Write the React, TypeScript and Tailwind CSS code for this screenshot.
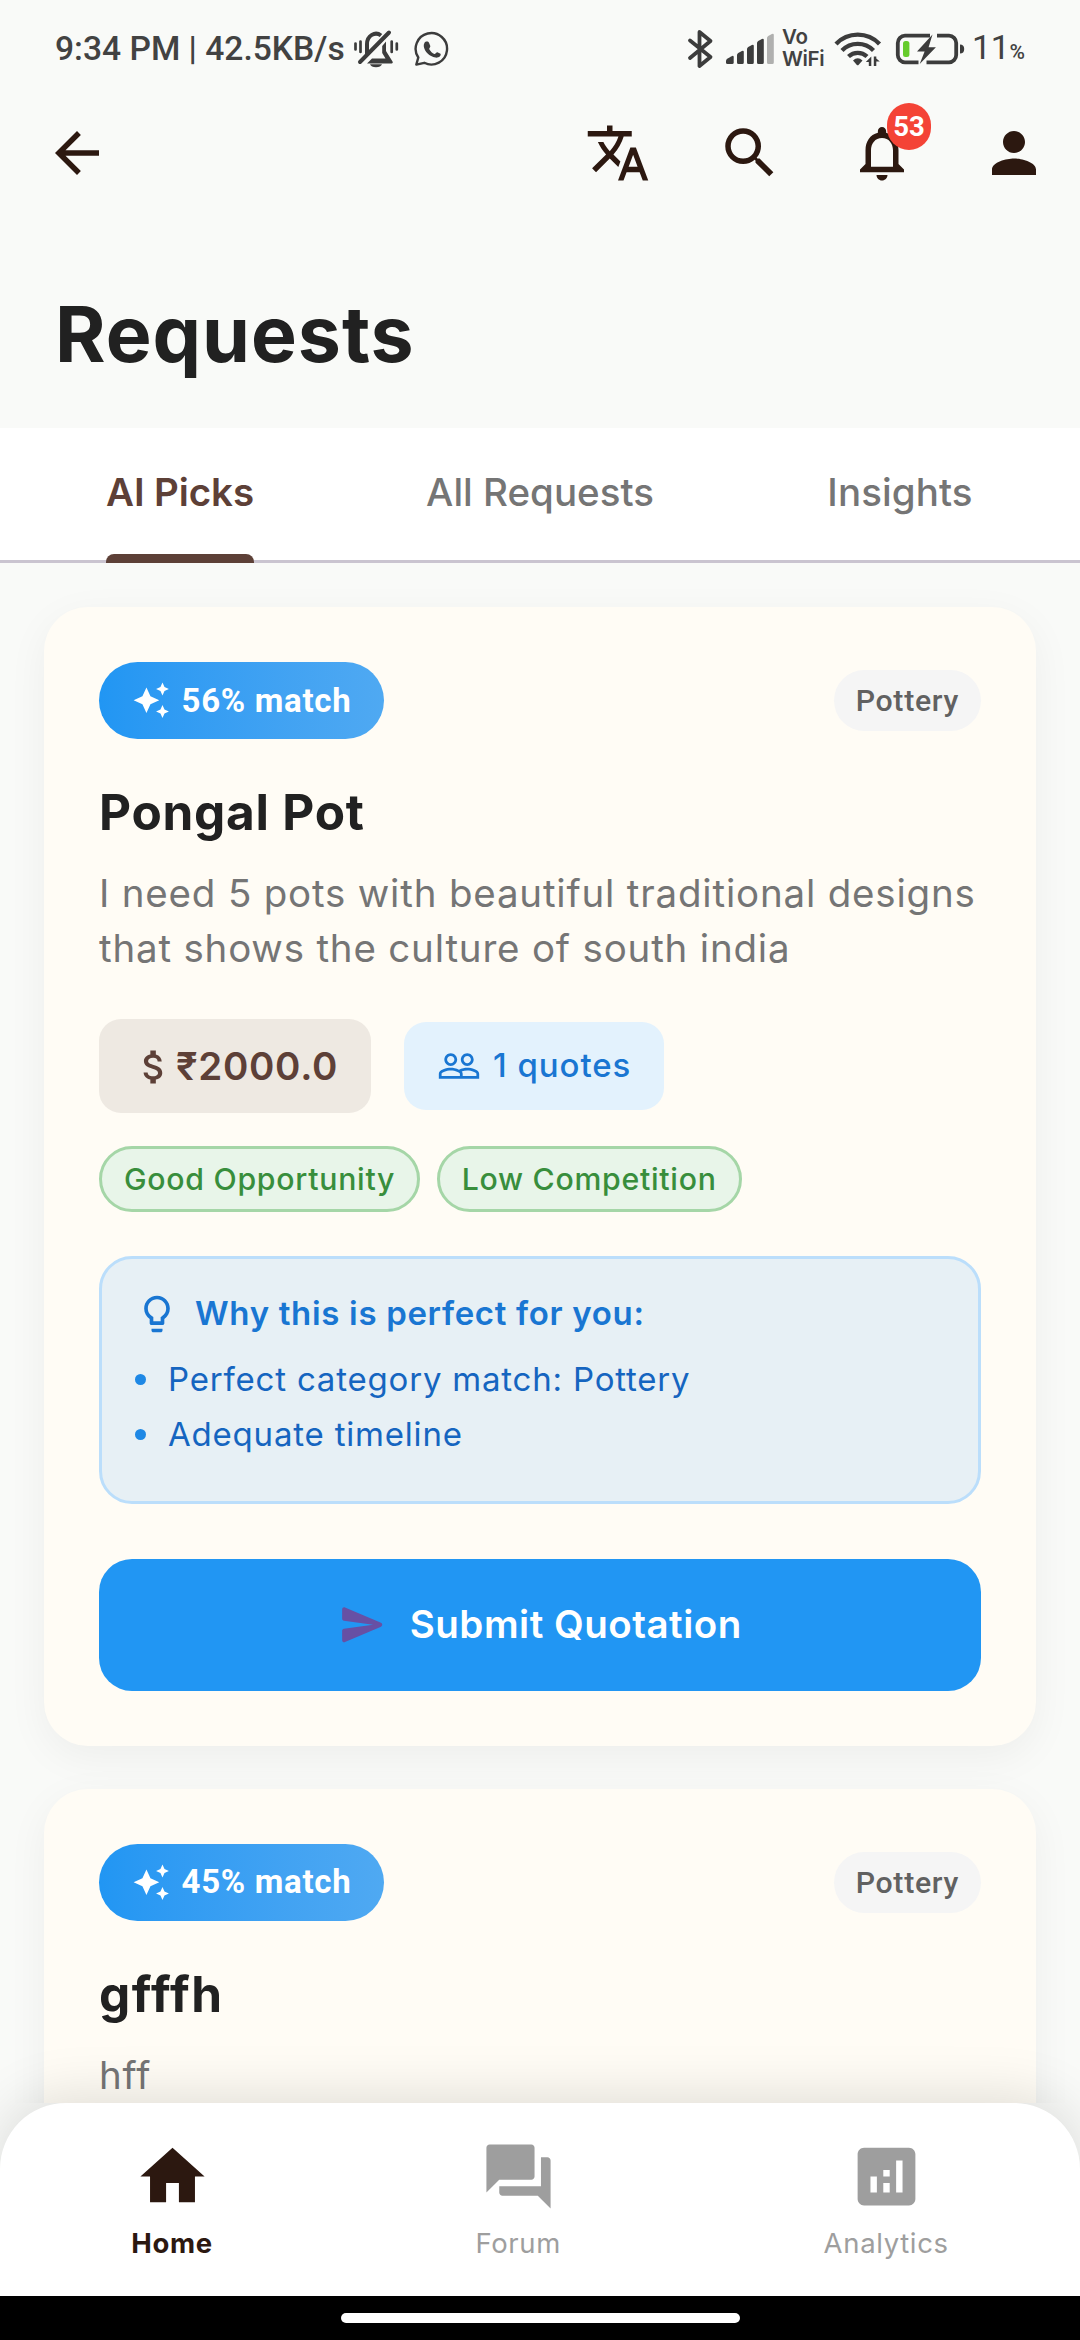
import type { ReactNode } from 'react';
import {
  MdAnalytics,
  MdArrowBack,
  MdAttachMoney,
  MdAutoAwesome,
  MdForum,
  MdHome,
  MdLightbulbOutline,
  MdNotificationsNone,
  MdPeopleOutline,
  MdPerson,
  MdSearch,
  MdTranslate,
} from 'react-icons/md';

const INK = '#3c3c3c';

function MutedBell() {
  return (
    <svg width="46" height="40" viewBox="353 28 46 40" fill="none">
      <path d="M367 54V43a9 10.5 0 0 1 14-8.5" stroke={INK} strokeWidth="4" />
      <path d="M386 40.5V50l6.5 10.5a1.2 1.2 0 0 1-1 2H367l5-5h13.5l-3.3-5.5V45z" fill={INK} />
      <path d="M360 61l29-29.500" stroke={INK} strokeWidth="4" strokeLinecap="round" />
      <path d="M370 63.300h12a6.200 4 0 0 1-12 0z" fill={INK} />
      <path d="M355.500 42.500v6M360.500 40.500v10.500M391.700 40.500v10.500M396.800 42.500v6" stroke={INK} strokeWidth="2.700" strokeLinecap="round" />
    </svg>
  );
}

function ChatCall() {
  return (
    <svg width="36" height="36" viewBox="413 29 36 36" fill="none">
      <path
        d="M417.300 55.500a15.700 15.700 0 1 1 6 5.300l-8 1.800z"
        stroke={INK}
        strokeWidth="2.400"
        strokeLinejoin="round"
      />
      <path
        d="M423.400 41c1-1.800 4-1.900 4.600-.2l1.300 3.200c.4 1-1.500 2.400-1 3.200 1.300 2.300 3 3.800 5 4.700 1.100.4 2.200-2 3.200-1.600l3 1.500c1 2.200-2 4.200-5 3.800-6-1-11-6-11.700-11-.2-1.300 0-2.500.6-3.600z"
        fill={INK}
      />
    </svg>
  );
}

function Bluetooth() {
  return (
    <svg width="28" height="40" viewBox="685 27 28 40" fill="none">
      <path
        d="M689 38.500L709.500 55 698.500 64V30l11 9L689 56"
        stroke={INK}
        strokeWidth="3.800"
        strokeLinecap="round"
        strokeLinejoin="round"
      />
    </svg>
  );
}

function Signal() {
  return (
    <svg width="48" height="32" viewBox="725 32 48 32">
      <g fill={INK}>
        <path d="M725 60q0-1.500 1.200-2.300l4.500-2.500q2-1 2 1V61.500q0 1.500-1.500 1.500h-4.700q-1.500 0-1.500-1.500z" />
        <path d="M736 54q0-1.200 1.200-2l3.700-2q1.900-.8 1.900 1V61.500q0 1.500-1.500 1.500h-3.800q-1.500 0-1.500-1.500z" />
        <path d="M746 48q0-1.200 1.200-2l3.700-2q1.900-.8 1.900 1V61.500q0 1.500-1.500 1.500h-3.800q-1.500 0-1.500-1.500z" />
        <path d="M756 42q0-1.200 1.200-2l3.700-2q1.900-.8 1.900 1V61.500q0 1.500-1.500 1.500h-3.800q-1.500 0-1.500-1.500z" />
      </g>
      <path
        d="M766 37q0-1.200 1.200-2l3.700-2q1.900-.8 1.900 1V61.500q0 1.500-1.500 1.500h-3.800q-1.500 0-1.500-1.500z"
        fill="#b0b0af"
      />
    </svg>
  );
}

function Wifi() {
  return (
    <svg width="48" height="36" viewBox="833 30 48 36" fill="none">
      <g stroke={INK} strokeWidth="4.300">
        <path d="M835 43a30 30 0 0 1 43.500 0" />
        <path d="M841 49.500a22 22 0 0 1 31.500 0" />
        <path d="M847.500 55.500a13.500 13.500 0 0 1 18.500 0" />
      </g>
      <path d="M852 59.500q4.700-4.500 9.500 0L857.500 64q-.8.700-1.600 0z" fill={INK} />
      <path d="M870.300 55.500v9.500h-2.500v-4l-3 0zM872.800 65v-9.500h2.500v2l3.500 3h-3.500V65z" fill={INK} />
    </svg>
  );
}

function Battery() {
  return (
    <svg width="70" height="32" viewBox="894 31 70 32" fill="none">
      <path
        d="M929 33.700H904a7.200 7.200 0 0 0-7.200 7.200v12.200a7.200 7.200 0 0 0 7.200 7.200h13.500M925.500 60.300H948a7.200 7.200 0 0 0 7.200-7.200V40.900a7.200 7.200 0 0 0-7.200-7.200H936"
        stroke={INK}
        strokeWidth="3.800"
      />
      <path d="M959 42.500q4.200 0 4.200 4.500t-4.200 4.500z" fill={INK} />
      <rect x="902" y="39" width="6.400" height="16" rx="2.500" fill="#66cc2c" />
      <path d="M931.500 32.500L916 49.400h7.600L918.700 62l16.200-16.700h-7.300z" fill={INK} />
    </svg>
  );
}

function SendIcon() {
  return (
    <svg width="49.5" height="49.5" viewBox="0 0 24 24" fill="#6750a4">
      <path d="M3.400 20.400l17.450-7.480c.81-.35.81-1.490 0-1.840L3.400 3.600c-.66-.29-1.390.2-1.390.91L2 9.120c0 .5.370.93.870.99L17 12 2.870 13.880c-.5.080-.87.500-.87 1l.010 4.610c0 .71.730 1.200 1.390.91z" />
    </svg>
  );
}

function StatusBar() {
  return (
    <div className="flex h-[96px] items-center pt-px pr-[55px] pl-[55px] font-['Roboto',sans-serif] text-[#424242]">
      <span className="text-[33.6px] leading-[40px] font-medium whitespace-pre">9:34 PM | 42.5KB/s</span>
      <div className="ml-[8px] flex items-center">
        <MutedBell />
        <div className="ml-[15px]">
          <ChatCall />
        </div>
      </div>
      <div className="ml-auto flex items-center">
        <Bluetooth />
        <div className="ml-[12px]">
          <Signal />
        </div>
        <div className="ml-[8px] flex w-[43px] flex-col pb-px font-['Inter',sans-serif] text-[20.5px] leading-[22px] font-semibold tracking-[-0.4px]">
          <span>Vo</span>
          <span>WiFi</span>
        </div>
        <div className="ml-[9px]">
          <Wifi />
        </div>
        <div className="ml-[13px]">
          <Battery />
        </div>
        <div className="ml-[7px] flex items-baseline pt-[2px]">
          <span className="text-[34px] leading-[40px] tracking-[-0.4px]">11</span>
          <span className="text-[21px] leading-[40px] font-medium">%</span>
        </div>
      </div>
    </div>
  );
}

function TopBar() {
  return (
    <div className="flex h-[114px] items-center justify-between pr-[33px] pl-[44px] text-[#2c1810]">
      <MdArrowBack size={66} />
      <div className="flex gap-[66px]">
        <MdTranslate size={66} />
        <MdSearch size={66} />
        <div className="relative">
          <MdNotificationsNone size={66} />
          <span className="absolute top-[-17px] left-[38px] flex h-[47px] w-[44px] items-center justify-center rounded-[22px] bg-[#f44336] pt-px font-['Roboto',sans-serif] text-[27.5px] leading-none font-bold text-white">
            53
          </span>
        </div>
        <MdPerson size={66} />
      </div>
    </div>
  );
}

function Tabs() {
  return (
    <div className="grid h-[135px] shrink-0 grid-cols-3 border-b-[3px] border-[#cac4d0] bg-white text-[38.5px] leading-[128px] font-medium text-[#757575]">
      <div className="flex justify-center">
        <span className="relative h-[128px] font-semibold tracking-[-0.1px] text-[#5d4037]">
          AI Picks
          <span className="absolute right-0 -bottom-[7px] left-0 h-[9px] rounded-t-[8px] bg-[#5d4037]" />
        </span>
      </div>
      <div className="text-center">All Requests</div>
      <div className="text-center tracking-[0.1px]">Insights</div>
    </div>
  );
}

function Card({ match, title, text, children }: { match: string; title: string; text: string; children?: ReactNode }) {
  return (
    <article className="rounded-[44px] bg-[#fffcf5] p-[55px] shadow-[0_11px_41px_rgba(0,0,0,0.05)]">
      <div className="flex h-[77px] items-center justify-between font-['Roboto',sans-serif]">
        <div className="flex h-[77px] items-center gap-[11px] rounded-full bg-linear-to-r from-[#2196f3] to-[#4fa9f2] px-[33px] text-white">
          <MdAutoAwesome size={38.5} />
          <span className="text-[33px] leading-[40px] font-bold tracking-[0.7px]">{match}</span>
        </div>
        <span className="rounded-full bg-[#f5f5f5] px-[22px] text-[30.25px] leading-[61px] font-medium tracking-[0.7px] text-[#616161]">
          Pottery
        </span>
      </div>
      <h2
        className={
          children
            ? 'mt-[39px] text-[49.5px] leading-[68px] font-bold tracking-[0.75px] text-[#212121]'
            : 'mt-[39px] text-[49.5px] leading-[68px] font-bold tracking-[1.5px] text-[#212121]'
        }
      >
        {title}
      </h2>
      <p className="mt-[20px] text-[38.5px] leading-[55px] tracking-[0.81px] text-[#757575]">{text}</p>
      {children}
    </article>
  );
}

function Reason({ children }: { children: ReactNode }) {
  return (
    <li className="flex h-[55px] items-center gap-[22px] text-[33px] tracking-[0.8px] text-[#1565c0]">
      <span className="size-[11px] rounded-full bg-[#1e88e5]" />
      {children}
    </li>
  );
}

function Chip({ children }: { children: ReactNode }) {
  return (
    <span className="rounded-full border-[3px] border-[#a5d6a7] bg-[#e8f5e9] px-[22px] text-[30.25px] leading-[60px] font-medium tracking-[0.72px] text-[#388e3c]">
      {children}
    </span>
  );
}

function NavItem({ icon, label, active }: { icon: ReactNode; label: string; active?: boolean }) {
  return (
    <div
      className={
        active
          ? 'flex flex-col items-center font-bold text-[#2c1810]'
          : 'flex flex-col items-center text-[#9e9e9e]'
      }
    >
      {icon}
      <span className="mt-[11px] text-[27.5px] leading-[34px] tracking-[0.65px]">{label}</span>
    </div>
  );
}

export default function App() {
  return (
    <div className="flex h-[2340px] w-[1080px] flex-col overflow-hidden bg-[#f9faf8] font-['Inter',sans-serif]">
      <header className="h-[428px] shrink-0">
        <StatusBar />
        <TopBar />
        <h1 className="mt-[78px] ml-[55px] text-[77px] leading-[92px] font-bold tracking-[1px] text-[#212121]">
          Requests
        </h1>
      </header>
      <Tabs />
      <main className="flex min-h-0 flex-1 flex-col gap-[43px] overflow-hidden px-[44px] pt-[44px]">
        <Card
          match="56% match"
          title="Pongal Pot"
          text="I need 5 pots with beautiful traditional designs that shows the culture of south india"
        >
          <div className="mt-[43px] flex items-center gap-[33px]">
            <div className="flex h-[94px] w-[272px] items-center rounded-[22px] bg-[#eee9e2] pt-px pl-[33px] text-[38.5px] font-semibold tracking-[0.68px] text-[#5d4037]">
              <MdAttachMoney size={44} />
              ₹2000.0
            </div>
            <div className="flex h-[88px] w-[260px] items-center gap-[12px] rounded-[22px] bg-[#e3f2fd] pl-[33px] text-[33px] font-medium tracking-[0.95px] whitespace-nowrap text-[#1976d2]">
              <MdPeopleOutline size={44} />1 quotes
            </div>
          </div>
          <div className="mt-[33px] flex gap-[16.5px]">
            <Chip>Good Opportunity</Chip>
            <Chip>Low Competition</Chip>
          </div>
          <section className="mt-[44px] h-[248px] rounded-[33px] border-[3px] border-[#bbdefb] bg-[#e7f0f5] px-[33px] pt-[33px]">
            <h3 className="flex h-[44px] items-center gap-[16px] text-[33px] font-semibold tracking-[0.67px] text-[#1976d2]">
              <MdLightbulbOutline size={44} />
              Why this is perfect for you:
            </h3>
            <ul className="mt-[16px]">
              <Reason>Perfect category match: Pottery</Reason>
              <Reason>Adequate timeline</Reason>
            </ul>
          </section>
          <button className="mt-[54.5px] flex h-[132px] w-full items-center justify-center gap-[22px] rounded-[33px] bg-[#2196f3] text-[38.5px] font-semibold tracking-[0.5px] text-white">
            <SendIcon />
            Submit Quotation
          </button>
        </Card>
        <Card match="45% match" title="gfffh" text="hff" />
      </main>
      <div className="z-10 shrink-0">
        <nav className="flex h-[193px] items-start justify-around rounded-t-[66px] bg-white pt-[35px] shadow-[0_-6px_55px_rgba(0,0,0,0.13)]">
          <NavItem icon={<MdHome size={77} />} label="Home" active />
          <NavItem icon={<MdForum size={77} />} label="Forum" />
          <NavItem icon={<MdAnalytics size={77} />} label="Analytics" />
        </nav>
      </div>
      <div className="z-20 flex h-[44px] shrink-0 items-start justify-center bg-black pt-[17px]">
        <div className="h-[10px] w-[399px] rounded-full bg-white" />
      </div>
    </div>
  );
}
